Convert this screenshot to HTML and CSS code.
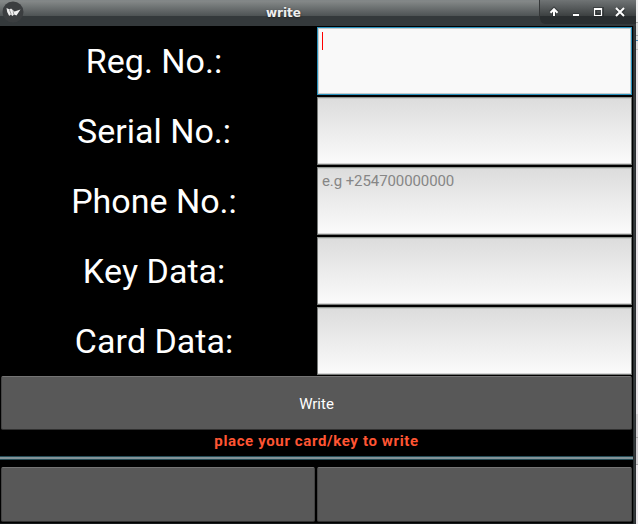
FILE: index.html
```html
<!DOCTYPE html>
<html lang="en">
<head>
<meta charset="utf-8">
<title>write</title>
<link rel="stylesheet" href="styles.css">
</head>
<body>
<div class="screen">
  <div class="window">
    <header class="titlebar">
      <svg class="logo" viewBox="0 0 24 26" width="24" height="26">
        <circle cx="13" cy="12" r="10.500" fill="#3b3e40"/>
        <path d="M6.500 8l3.200 1.500 1.300-1 3.500 3 6-2-4 6-2.500-1-1.500 1.500-1.800-1.500-1.500 1.500-2-4z" fill="#f0f0f0"/>
        <path d="M9.500 10l1.800 4.500M13 10.500l.8 4" stroke="#777" stroke-width=".7" fill="none"/>
      </svg>
      <h1 class="title">write</h1>
      <div class="controls">
        <svg viewBox="0 0 94 26" width="94" height="26">
          <g fill="none" stroke="#24282a" stroke-width="4" opacity=".55">
            <path d="M14 16V9M10.500 12.500L14 9l3.500 3.500M33 15h6M55 9h7v6h-7zM77 9l7 7M84 9l-7 7"/>
          </g>
          <g fill="none" stroke="#fff" stroke-width="2">
            <path d="M14 16V9M10.500 12.700L14 9.200l3.500 3.500"/>
            <path d="M33 15h6"/>
            <path d="M54.500 8.500v7h7v-7z" stroke-width="1.200"/>
            <path d="M54 9h8"/>
            <path d="M76 8l8 8M84 8l-8 8"/>
          </g>
        </svg>
      </div>
    </header>
    <main class="content">
      <form class="form">
        <label class="label">Reg. No.:</label><div class="field active"><span class="caret"></span></div>
        <label class="label">Serial No.:</label><div class="field"></div>
        <label class="label">Phone No.:</label><div class="field">e.g +254700000000</div>
        <label class="label">Key Data:</label><div class="field"></div>
        <label class="label">Card Data:</label><div class="field"></div>
      </form>
      <button class="button write">Write</button>
      <p class="status">place your card/key to write</p>
      <div class="divider"></div>
      <div class="actions">
        <button class="button"></button>
        <button class="button"></button>
      </div>
    </main>
  </div>
  <div class="desktop"></div>
</div>
</body>
</html>
```
FILE: styles.css
```css
* { box-sizing: border-box; }
body {
  margin: 0;
  background: #000;
  color: #fff;
  font-family: Roboto, sans-serif;
}
.screen {
  display: flex;
  width: 638px;
  height: 524px;
  overflow: hidden;
}
.window {
  width: 636px;
  background: linear-gradient(90deg, #171a1b 0 633px, #353a3c 634px 635px, #2a2e30 635px);
}
.titlebar {
  display: flex;
  height: 26px;
  background: linear-gradient(#7f8485 0, #858989 1px, #4e5354 16px, #34393b 16px, #34393b 100%);
}
.logo { width: 24px; }
.title {
  margin: 0 0 0 242px;
  font: bold 12px/26px "DejaVu Sans", sans-serif;
  color: #eee;
  text-shadow: 0 1px 2px #222;
}
.controls {
  width: 97px;
  height: 24px;
  margin-left: auto;
  border-left: 1px solid #353839;
  border-bottom-left-radius: 6px;
  background: linear-gradient(#707475 0, #3c4041 16px, #292d2f 16px, #292d2f 100%);
}
.controls svg { display: block; }
.content {
  width: 633px;
  height: 497px;
  background: #000;
}
.form {
  display: grid;
  grid-template-columns: 317px 316px;
  grid-template-rows: repeat(5, 70px);
}
.label {
  display: flex;
  align-items: center;
  justify-content: center;
  padding-right: 9px;
  font-size: 34px;
  line-height: 40px;
  font-kerning: none;
}
.field {
  margin: 1px 1px 1px 0;
  padding: 4px;
  border: 1px solid #777a78;
  border-top-color: #929692;
  box-shadow: inset 0 1px #c9ccc9, inset 0 -1px #d5d5d5;
  background: linear-gradient(#dcdcdc, #fbfbfb);
  color: #868686;
  font-size: 15px;
  line-height: 18px;
  letter-spacing: -0.09px;
}
.active {
  border-color: #2991bc;
  box-shadow: inset 0 0 0 1px #c6cccd;
  background: #f9f9f9;
}
.caret {
  display: block;
  width: 1px;
  height: 18px;
  background: #f00;
}
.button {
  display: block;
  padding: 0;
  border: 1px solid #444;
  border-top-color: #747474;
  border-bottom-color: #303030;
  border-radius: 2px;
  background: #585858;
  color: #fff;
  font: 15px/18px Roboto, sans-serif;
}
.write {
  width: 631px;
  height: 54px;
  margin-left: 1px;
  padding-top: 2px;
}
.status {
  height: 26px;
  margin: 0;
  font-weight: bold;
  font-size: 15px;
  line-height: 22px;
  text-align: center;
  letter-spacing: 0.63px;
  color: #ff5533;
}
.divider {
  height: 4px;
  border: solid #244c57;
  border-width: 1px 0;
  background: #839297;
}
.actions {
  display: grid;
  grid-template-columns: 314px 315px;
  grid-template-rows: 55px;
  gap: 2px;
  padding: 7px 1px 0;
}
.desktop {
  width: 2px;
  background: linear-gradient(#eee 0 22px, #aaa 22px 23px, #ddd 23px 35px, #aaa 35px 36px, #ddd 36px 40px, #4584b5 40px 41px, #ddd 41px 49px, #bbb 49px 50px, #e6e2e6 50px 414px, #d3d0d3 414px 437px, #aaa 437px 438px, #d3d0d3 438px 464px, #aaa 464px 465px, #eae6ea 465px);
}
```
